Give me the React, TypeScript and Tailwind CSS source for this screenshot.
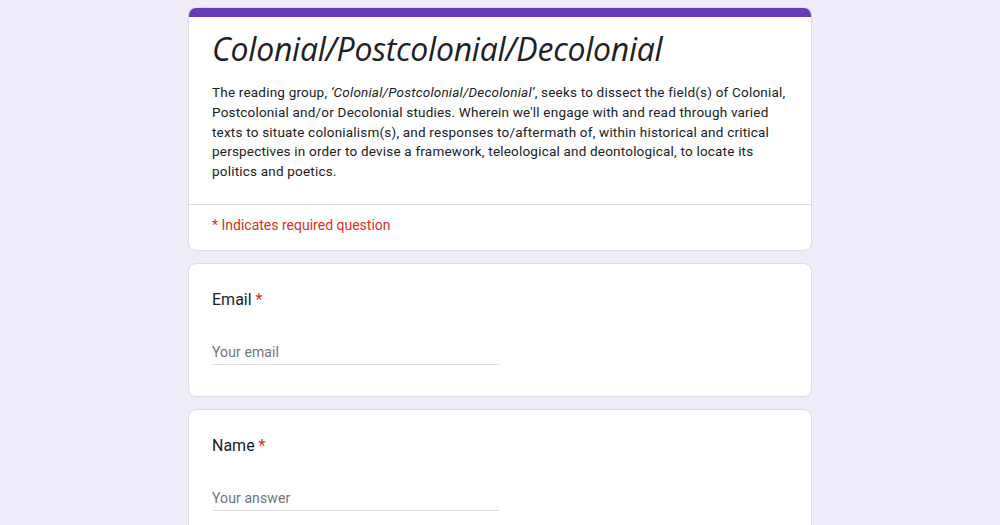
import React from 'react';

const body = { fontFamily: 'Roboto, "Liberation Sans", sans-serif' };

const Question: React.FC<{ label: string; placeholder: string }> = ({ label, placeholder }) => (
    <div className="bg-white rounded-lg border border-[#dadce0] pl-[23px] pr-6 pt-6 pb-[31px]">
        <div className="text-[16px] text-[#202124] leading-6" style={body}>
            {label} <span className="text-[#d93025]">*</span>
        </div>
        <div className="mt-[27px] w-[288px] border-b border-[#e0e0e0] pb-px">
            <span className="text-[14px] text-[#70757a] leading-5" style={{ ...body, letterSpacing: '0.1px' }}>
                {placeholder}
            </span>
        </div>
    </div>
);

export default function App() {
    return (
        <div className="min-h-screen bg-[#f0ebf8] pt-[7px]">
            <div className="w-[624px] mx-auto flex flex-col gap-[12px]">
                <div className="bg-white rounded-lg border border-[#dadce0] overflow-hidden">
                    <div className="h-[10px] bg-[#673ab7] -mx-px -mt-px" />
                    <div className="pl-[23px] pr-6 pt-[12px] pb-[22px]">
                        <h1
                            className="text-[32px] leading-[40px] italic text-[#202124]"
                            style={{ fontFamily: '"Open Sans", Inter, sans-serif', letterSpacing: '-0.25px' }}
                        >
                            Colonial/Postcolonial/Decolonial
                        </h1>
                        <p
                            className="mt-[14px] text-[13.5px] leading-[19.8px] text-[#202124]"
                            style={{ ...body, letterSpacing: '0.2px' }}
                        >
                            The reading group, <i>‘Colonial/Postcolonial/Decolonial’</i>, seeks to dissect the field(s) of Colonial,
                            Postcolonial and/or Decolonial studies. Wherein we'll engage with and read through varied
                            texts to situate colonialism(s), and responses to/aftermath of, within historical and critical
                            perspectives in order to devise a framework, teleological and deontological, to locate its
                            politics and poetics.
                        </p>
                    </div>
                    <div className="border-t border-[#dadce0] pl-[23px] pr-6 pt-[7px] pb-[14px]">
                        <span className="text-[14px] leading-5 text-[#d93025]" style={body}>* Indicates required question</span>
                    </div>
                </div>
                <Question label="Email" placeholder="Your email" />
                <Question label="Name" placeholder="Your answer" />
            </div>
        </div>
    );
}
